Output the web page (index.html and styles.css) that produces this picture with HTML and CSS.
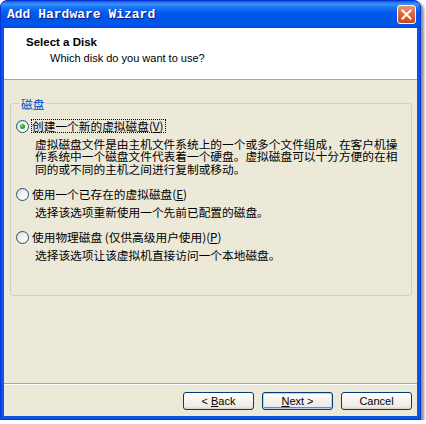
FILE: index.html
```html
<!DOCTYPE html>
<html>
<head>
<meta charset="utf-8">
<link rel="stylesheet" href="styles.css">
</head>
<body>
<div class="window">
  <div class="titlebar">
    <span class="title">Add Hardware Wizard</span>
    <span class="close">
      <svg width="17" height="17" viewBox="0 0 17 17"><path d="M4.5 4.5 L12.5 12.5 M12.5 4.5 L4.5 12.5" stroke="#fff" stroke-width="2" stroke-linecap="square"/></svg>
    </span>
  </div>
  <div class="frame">
    <div class="header">
      <div class="h-title">Select a Disk</div>
      <div class="h-sub">Which disk do you want to use?</div>
    </div>
    <div class="content">
      <fieldset class="group">
        <legend class="legend">磁盘</legend>
        <div class="option first">
          <div class="opt-row"><span class="radio checked"></span><span class="opt-label focus">创建一个新的虚拟磁盘(<u>V</u>)</span></div>
          <div class="opt-desc">
            <div class="line">虚拟磁盘文件是由主机文件系统上的一个或多个文件组成，在客户机操</div>
            <div class="line">作系统中一个磁盘文件代表着一个硬盘。虚拟磁盘可以十分方便的在相</div>
            <div class="line">同的或不同的主机之间进行复制或移动。</div>
          </div>
        </div>
        <div class="option">
          <div class="opt-row"><span class="radio"></span><span class="opt-label">使用一个已存在的虚拟磁盘(<u>E</u>)</span></div>
          <div class="opt-desc"><div class="line">选择该选项重新使用一个先前已配置的磁盘。</div></div>
        </div>
        <div class="option">
          <div class="opt-row"><span class="radio"></span><span class="opt-label">使用物理磁盘 (仅供高级用户使用)(<u>P</u>)</span></div>
          <div class="opt-desc"><div class="line">选择该选项让该虚拟机直接访问一个本地磁盘。</div></div>
        </div>
      </fieldset>
    </div>
    <div class="footer">
      <button class="btn">&lt; <u>B</u>ack</button>
      <button class="btn default"><u>N</u>ext &gt;</button>
      <button class="btn">Cancel</button>
    </div>
  </div>
</div>
</body>
</html>
```
FILE: styles.css
```css
body {
  margin: 0;
  background: #ffffff;
  font-family: "Liberation Sans", "Noto Sans CJK SC", sans-serif;
}
.window {
  width: 421px;
  height: 420px;
  box-sizing: border-box;
  border: 1px solid #0831d9;
  border-radius: 7px 7px 0 0;
  background: #0a55e4;
  box-shadow: 3px 3px 3px rgba(0, 0, 0, 0.45);
  display: flex;
  flex-direction: column;
}
.titlebar {
  height: 27px;
  flex: none;
  display: flex;
  align-items: flex-start;
  justify-content: space-between;
  padding: 0 4px 0 6px;
  border-radius: 6px 6px 0 0;
  background: linear-gradient(180deg, #0a5ad8 0px, #3d95ff 3px, #1b78f5 6px, #0058ee 12px, #0055e5 20px, #0058ee 24px, #0048d5 27px);
}
.title {
  margin-top: 6px;
  font-family: "Liberation Mono", monospace;
  font-weight: bold;
  font-size: 13px;
  line-height: 15px;
  color: #ffffff;
  text-shadow: 1px 1px #0a1883;
}
.close {
  margin-top: 4px;
  width: 19px;
  height: 19px;
  box-sizing: border-box;
  border: 1px solid #ffffff;
  border-radius: 3px;
  background: linear-gradient(180deg, #e8977c 0%, #dd6d4b 40%, #c8461f 100%);
  display: flex;
  align-items: center;
  justify-content: center;
}
.close svg {
  display: block;
}
.frame {
  flex: 1;
  display: flex;
  flex-direction: column;
  padding: 0 3px 3px;
}
.header {
  height: 52px;
  flex: none;
  box-sizing: border-box;
  background: #ffffff;
  border-bottom: 1px solid #aca899;
  padding: 7px 0 0 22px;
}
.h-title {
  font-weight: bold;
  font-size: 11.5px;
  line-height: 14px;
  color: #000;
}
.h-sub {
  margin: 2px 0 0 24px;
  font-size: 11px;
  line-height: 14px;
  color: #000;
}
.content {
  height: 303px;
  flex: none;
  box-sizing: border-box;
  background: #ece9d8;
  padding: 17px 5px 0 6px;
}
.group {
  margin: 0;
  height: 199px;
  box-sizing: border-box;
  border: 1px solid #d0d0bf;
  border-radius: 3px;
  padding: 0 0 0 5px;
  min-width: 0;
}
.legend {
  margin-left: 3px;
  padding: 0 2px;
  font-family: "Noto Sans CJK SC", sans-serif;
  font-size: 11.7px;
  line-height: 13px;
  color: #0046d5;
}
.option {
  margin-top: 13px;
}
.option.first {
  margin-top: 9px;
}
.opt-row {
  display: flex;
  align-items: center;
  height: 14px;
}
.radio {
  width: 13px;
  height: 13px;
  box-sizing: border-box;
  border: 1px solid #1c5180;
  border-radius: 50%;
  background: linear-gradient(135deg, #dcd9cf 0%, #f3f2ee 50%, #ffffff 100%);
  margin-right: 2px;
  display: flex;
  align-items: center;
  justify-content: center;
  flex: none;
}
.radio.checked::after {
  content: "";
  width: 5px;
  height: 5px;
  border-radius: 50%;
  background: radial-gradient(circle at 35% 35%, #6fd66f 0%, #21a121 60%, #178317 100%);
}
.opt-label {
  font-family: "Noto Sans CJK SC", sans-serif;
  font-size: 11.7px;
  line-height: 12px;
  border: 1px dotted transparent;
  padding: 0 1px 0 0;
  white-space: nowrap;
  color: #000;
}
.opt-label.focus {
  border-color: #000;
}
.opt-desc {
  margin: 3.5px 0 0 19px;
  font-family: "Noto Sans CJK SC", sans-serif;
  font-size: 11.7px;
  color: #000;
}
.line {
  height: 12.5px;
  line-height: 13px;
  white-space: nowrap;
}
.footer {
  flex: 1;
  background: #ece9d8;
  border-top: 1px solid #aca899;
  box-shadow: inset 0 1px #ffffff;
  display: flex;
  justify-content: flex-end;
  align-items: flex-start;
  gap: 8px;
  padding: 8px 5px 0 0;
}
.btn {
  width: 71px;
  height: 18px;
  box-sizing: border-box;
  margin: 0;
  padding: 0;
  border: 1px solid #003c74;
  border-radius: 3px;
  background: linear-gradient(180deg, #ffffff 0%, #f4f3ee 50%, #ecebe6 85%, #d6d0c5 100%);
  font-family: "Liberation Sans", sans-serif;
  font-size: 11px;
  line-height: 16px;
  color: #000;
}
.btn.default {
  box-shadow: inset 0 0 0 1px #b9d1fa, inset 0 -1px 0 1px #6982ee;
}
```
